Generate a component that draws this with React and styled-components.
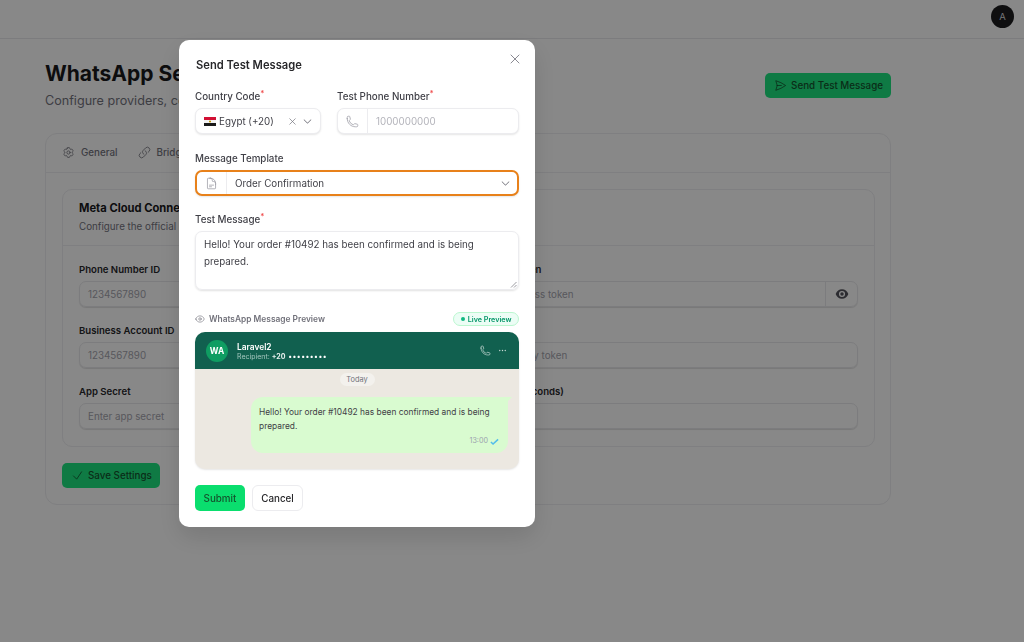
import React from "react";
import styled, { createGlobalStyle } from "styled-components";
import {
  HiOutlinePaperAirplane, HiOutlineCog6Tooth, HiOutlineLink, HiOutlineCheck, HiOutlineXMark,
  HiOutlinePhone, HiOutlineDocumentText, HiOutlineEye, HiEllipsisHorizontal, HiEye, HiChevronDown,
} from "react-icons/hi2";

const Global = createGlobalStyle`
  * { box-sizing: border-box; }
  html, body { margin: 0; height: 100%; }
  body { background: #fafafa; font-family: Inter, "Liberation Sans", sans-serif; font-size: 9.8px; color: #18181b; overflow: hidden; }
`;

const Page = styled.div`height: 642px; background: #fafafa;`;
const Topbar = styled.header`height: 39px; border-bottom: 1px solid #e4e4e7; display: flex; justify-content: flex-end; align-items: flex-start; padding: 5px 10px 0 0;`;
const Avatar = styled.div`width: 23px; height: 23px; border-radius: 50%; background: #1c1c1f; color: #d4d4d8; font-size: 9.5px; display: flex; align-items: center; justify-content: center;`;
const Main = styled.main`width: 891px; padding: 21px 0 0 45px;`;
const PageHead = styled.div`display: flex; justify-content: space-between; align-items: center; margin-bottom: 22px;`;
const PageTitle = styled.h1`margin: 0; font-size: 21px; line-height: 28px; font-weight: 700; color: #18181b;`;
const PageSub = styled.p`margin: 3px 0 0; font-size: 12.6px; line-height: 20px; color: #71717a;`;
const GreenButton = styled.button`
  height: 25px; padding: 0 8px 0 9px; border: 0; border-radius: 5px; background: #1ce07e; color: #14532d;
  font: 500 9.8px Inter, sans-serif; display: inline-flex; align-items: center; gap: 4px;
  svg { width: 13px; height: 13px; }
`;
const OuterCard = styled.section`border: 1px solid #e9e9ec; border-radius: 12px; padding: 0 0 16px; background: #fafafa;`;
const Tabs = styled.nav`height: 39px; padding: 0 0 2px 16px; border-bottom: 1px solid #e9e9ec; display: flex; align-items: center; gap: 20px;`;
const Tab = styled.span`display: inline-flex; align-items: center; gap: 6px; color: #71717a; font-weight: 500; font-size: 9.8px; svg { width: 13px; height: 13px; }`;
const InnerCard = styled.div`margin: 16px 15px 16px 16px; border: 1px solid #e9e9ec; border-radius: 10px;`;
const InnerHead = styled.div`height: 56px; padding: 11px 16px 0; border-bottom: 1px solid #e9e9ec;`;
const InnerTitle = styled.h3`margin: 0; font-size: 11.2px; line-height: 14px; font-weight: 700; color: #18181b;`;
const InnerDesc = styled.p`margin: 5px 0 0; font-size: 9.8px; line-height: 14px; color: #71717a;`;
const FormGrid = styled.div`padding: 16px 16px 17px; display: grid; grid-template-columns: 1fr 1fr; gap: 16px; `;
const BgField = styled.div`display: flex; flex-direction: column; gap: 4px;`;
const BgLabel = styled.label`padding-top: 1px; font-size: 9.6px; line-height: 14px; font-weight: 600; color: #27272a; white-space: nowrap;`;
const BgInput = styled.div`
  height: 26px; border: 1px solid #e4e4e7; border-radius: 7px; box-shadow: 0 1px 1px rgba(0,0,0,.12);
  display: flex; align-items: stretch; color: #a1a1aa; font-size: 9.8px;
`;
const BgText = styled.span`flex: 1; padding-left: 8px; display: flex; align-items: center;`;
const BgAddon = styled.span`width: 32px; border-left: 1px solid #e4e4e7; display: flex; align-items: center; justify-content: center; color: #52525b; svg { width: 14px; height: 14px; }`;

const Overlay = styled.div`position: fixed; inset: 0; background: rgba(0,0,0,.455); padding: 40px 0 0 179px;`;
const Modal = styled.div`
  width: 356px; height: 487px; background: #fff; border-radius: 10px; padding: 17px 16px 0; position: relative;
  box-shadow: 0 10px 25px rgba(0,0,0,.12);
`;
const ModalTitle = styled.h2`margin: 0 0 16px; padding-left: 1px; font-size: 11.2px; line-height: 16px; font-weight: 600; color: #27272a;`;
const CloseBtn = styled.button`
  position: absolute; top: 11px; right: 12px; border: 0; background: none; padding: 0; color: #8a8a92; display: flex;
  svg { width: 16px; height: 16px; }
`;
const TopRow = styled.div`display: grid; grid-template-columns: 126px 1fr; gap: 16px; margin-bottom: 17px;`;
const Field = styled.div`display: flex; flex-direction: column; gap: 4px; margin-top: ${p => p.$mt || 0}px;`;
const Label = styled.label`padding-top: 1px; font-size: 9.8px; line-height: 14px; font-weight: 500; color: #3f3f46;
  sup { color: #ef4444; font-size: 8px; line-height: 0; }
`;
const Control = styled.div`
  height: 26px;
  border: ${p => (p.$focus ? "2px solid #e8811a" : "1px solid #ececef")};
  border-radius: 7px; display: flex; align-items: stretch; background: #fff;
  box-shadow: 0 1px 2px rgba(0,0,0,.1); color: #3f3f46; font-size: 9.8px;
`;
const Addon = styled.span`width: 30px; border-right: 1px solid #ececef; display: flex; align-items: center; justify-content: center; color: #a1a1aa; svg { width: 13px; height: 13px; }`;
const ControlText = styled.span`flex: 1; display: flex; align-items: center; padding-left: 8px; color: ${p => p.$muted ? "#b4b4bb" : "#3f3f46"}; gap: 3px;`;
const Chevron = styled(HiChevronDown)`width: 11px; height: 11px; color: #71717a; align-self: center; margin-right: ${p => p.$mr}px;`;
const ClearX = styled(HiOutlineXMark)`width: 11px; height: 11px; color: #71717a; align-self: center; margin-right: 4px;`;
const Textarea = styled.div`
  position: relative; height: 59px; border: 1px solid #ececef; border-radius: 7px; padding: 4px 8px;
  box-shadow: 0 1px 2px rgba(0,0,0,.12); font-size: 9.8px; line-height: 17px; color: #3f3f46;
`;
const Grip = styled.svg`position: absolute; right: 1px; bottom: 1px; width: 7px; height: 7px; color: #71717a;`;
const PreviewHead = styled.div`display: flex; justify-content: space-between; align-items: center; height: 14px; margin: 22px 0 6px;`;
const PreviewLabel = styled.span`display: inline-flex; align-items: center; gap: 4px; font-size: 8.4px; font-weight: 600; color: #71717a; svg { width: 10px; height: 10px; }`;
const LiveBadge = styled.span`
  height: 14px; padding: 0 6.5px; border-radius: 7px; border: 1px solid #bbf7d0; background: #ecfdf5; color: #059669;
  font-size: 7.2px; font-weight: 600; display: inline-flex; align-items: center; gap: 3px;
`;
const LiveDot = styled.i`width: 4px; height: 4px; border-radius: 50%; background: #10b981;`;
const Chat = styled.div`height: 137px; border-radius: 10px; overflow: hidden; background: #ece8e1; box-shadow: 0 1px 2px rgba(0,0,0,.1);`;
const ChatHead = styled.div`height: 37px; background: #11604f; color: #fff; display: flex; align-items: center; padding: 0 11px; gap: 9px;`;
const ChatAvatar = styled.div`width: 22px; height: 22px; border-radius: 50%; background: #0f9d62; font-size: 8.4px; font-weight: 700; display: flex; align-items: center; justify-content: center;`;
const ChatWho = styled.div`flex: 1; padding-top: 2px; display: flex; flex-direction: column;`;
const ChatName = styled.span`font-size: 8.4px; line-height: 10px; font-weight: 600;`;
const ChatRecipient = styled.span`font-size: 7px; line-height: 10px; color: #a5c7bf; display: flex; align-items: center; gap: 2px;`;
const Num = styled.b`color: #e8f1ef; font-size: 7px; font-weight: 700;`;
const Masked = styled.b`color: #fff; font-size: 7px; letter-spacing: 1px; font-weight: 700; margin-left: 1px;`;
const ChatActions = styled.div`display: flex; align-items: center; gap: 6px; color: #c9dad6; svg { width: 11px; height: 11px; }`;
const ChatBody = styled.div`display: flex; flex-direction: column; align-items: center; padding-top: 4px;`;
const DayPill = styled.span`height: 13px; width: 35px; border-radius: 7px; background: #f3f1ed; color: #71717a; font-size: 7.4px; display: flex; align-items: center; justify-content: center;`;
const Bubble = styled.div`
  position: relative; align-self: flex-end; margin: 11px 11px 0 0; width: 257px; height: 56px; padding: 8px 8px; background: #d9fbd0;
  border-radius: 12px 0 12px 12px; font-size: 8.4px; line-height: 14px; color: #3f3f46;
  &::after { content: ""; position: absolute; top: 0; left: 100%; border-top: 4px solid #d9fbd0; border-right: 4px solid transparent; }
`;
const Meta = styled.div`display: flex; justify-content: flex-end; align-items: center; gap: 2px; font-size: 7.2px; line-height: 10px; color: #9ca3af; margin-top: 3px;`;
const Tick = styled.svg`width: 9px; height: 9px; margin-right: 1px; color: #53bdeb;`;
const Actions = styled.div`display: flex; gap: 7px; margin-top: 16px;`;
const SubmitBtn = styled.button`height: 26px; width: 50px; border: 0; border-radius: 5px; background: #0ade6e; color: #14532d; font: 500 9.8px Inter, sans-serif; padding: 0;`;
const CancelBtn = styled.button`height: 26px; width: 51px; border: 1px solid #ececef; border-radius: 6px; background: #fff; color: #27272a; font: 500 9.8px Inter, sans-serif; padding: 0;`;
const FooterRow = styled.div`padding-left: 16px;`;

const Flag = () => (
  <svg width="12" height="9" viewBox="0 0 12 9">
    <rect width="12" height="3" fill="#d21034" />
    <rect y="3" width="12" height="3" fill="#f4f4f4" />
    <rect y="6" width="12" height="3" fill="#1a1a1a" />
    <rect x="5" y="3.7" width="2" height="1.6" fill="#c09300" />
  </svg>
);

export default function App() {
  return (
    <>
      <Global />
      <Page>
        <Topbar><Avatar>A</Avatar></Topbar>
        <Main>
          <PageHead>
            <div>
              <PageTitle>WhatsApp Settings</PageTitle>
              <PageSub>Configure providers, connections and delivery options</PageSub>
            </div>
            <GreenButton><HiOutlinePaperAirplane />Send Test Message</GreenButton>
          </PageHead>
          <OuterCard>
            <Tabs>
              <Tab><HiOutlineCog6Tooth />General</Tab>
              <Tab><HiOutlineLink />Bridge</Tab>
            </Tabs>
            <InnerCard>
              <InnerHead>
                <InnerTitle>Meta Cloud Connection</InnerTitle>
                <InnerDesc>Configure the official Meta Cloud API credentials</InnerDesc>
              </InnerHead>
              <FormGrid>
                <BgField><BgLabel>Phone Number ID</BgLabel><BgInput><BgText>1234567890</BgText></BgInput></BgField>
                <BgField><BgLabel>Access Token</BgLabel><BgInput><BgText>Enter access token</BgText><BgAddon><HiEye /></BgAddon></BgInput></BgField>
                <BgField><BgLabel>Business Account ID</BgLabel><BgInput><BgText>1234567890</BgText></BgInput></BgField>
                <BgField><BgLabel>Verify Token</BgLabel><BgInput><BgText>Enter verify token</BgText></BgInput></BgField>
                <BgField><BgLabel>App Secret</BgLabel><BgInput><BgText>Enter app secret</BgText></BgInput></BgField>
                <BgField><BgLabel>Timeout (seconds)</BgLabel><BgInput><BgText /></BgInput></BgField>
              </FormGrid>
            </InnerCard>
            <FooterRow><GreenButton><HiOutlineCheck />Save Settings</GreenButton></FooterRow>
          </OuterCard>
        </Main>
      </Page>
      <Overlay>
        <Modal>
          <CloseBtn><HiOutlineXMark /></CloseBtn>
          <ModalTitle>Send Test Message</ModalTitle>
          <TopRow>
            <Field>
              <Label>Country Code<sup>*</sup></Label>
              <Control>
                <ControlText><Flag /> Egypt (+20)</ControlText>
                <ClearX /><Chevron $mr={7} />
              </Control>
            </Field>
            <Field>
              <Label>Test Phone Number<sup>*</sup></Label>
              <Control>
                <Addon><HiOutlinePhone /></Addon>
                <ControlText $muted>1000000000</ControlText>
              </Control>
            </Field>
          </TopRow>
          <Field>
            <Label>Message Template</Label>
            <Control $focus>
              <Addon><HiOutlineDocumentText /></Addon>
              <ControlText>Order Confirmation</ControlText>
              <Chevron $mr={6} />
            </Control>
          </Field>
          <Field $mt={16}>
            <Label>Test Message<sup>*</sup></Label>
            <Textarea>
              Hello! Your order #10492 has been confirmed and is being prepared.
              <Grip viewBox="0 0 7 7"><path d="M6.5 1 1 6.5M6.5 4 4 6.5" stroke="currentColor" strokeWidth=".7" /></Grip>
            </Textarea>
          </Field>
          <PreviewHead>
            <PreviewLabel><HiOutlineEye />WhatsApp Message Preview</PreviewLabel>
            <LiveBadge><LiveDot />Live Preview</LiveBadge>
          </PreviewHead>
          <Chat>
            <ChatHead>
              <ChatAvatar>WA</ChatAvatar>
              <ChatWho>
                <ChatName>Laravel2</ChatName>
                <ChatRecipient>Recipient: <Num>+20</Num><Masked>•••••••••</Masked></ChatRecipient>
              </ChatWho>
              <ChatActions><HiOutlinePhone /><HiEllipsisHorizontal /></ChatActions>
            </ChatHead>
            <ChatBody>
              <DayPill>Today</DayPill>
              <Bubble>
                Hello! Your order #10492 has been confirmed and is being prepared.
                <Meta>13:00 <Tick viewBox="0 0 10 10"><path d="M1 5.5 3.4 7.8 9 2.6" fill="none" stroke="currentColor" strokeWidth="1.7" /></Tick></Meta>
              </Bubble>
            </ChatBody>
          </Chat>
          <Actions>
            <SubmitBtn>Submit</SubmitBtn>
            <CancelBtn>Cancel</CancelBtn>
          </Actions>
        </Modal>
      </Overlay>
    </>
  );
}
